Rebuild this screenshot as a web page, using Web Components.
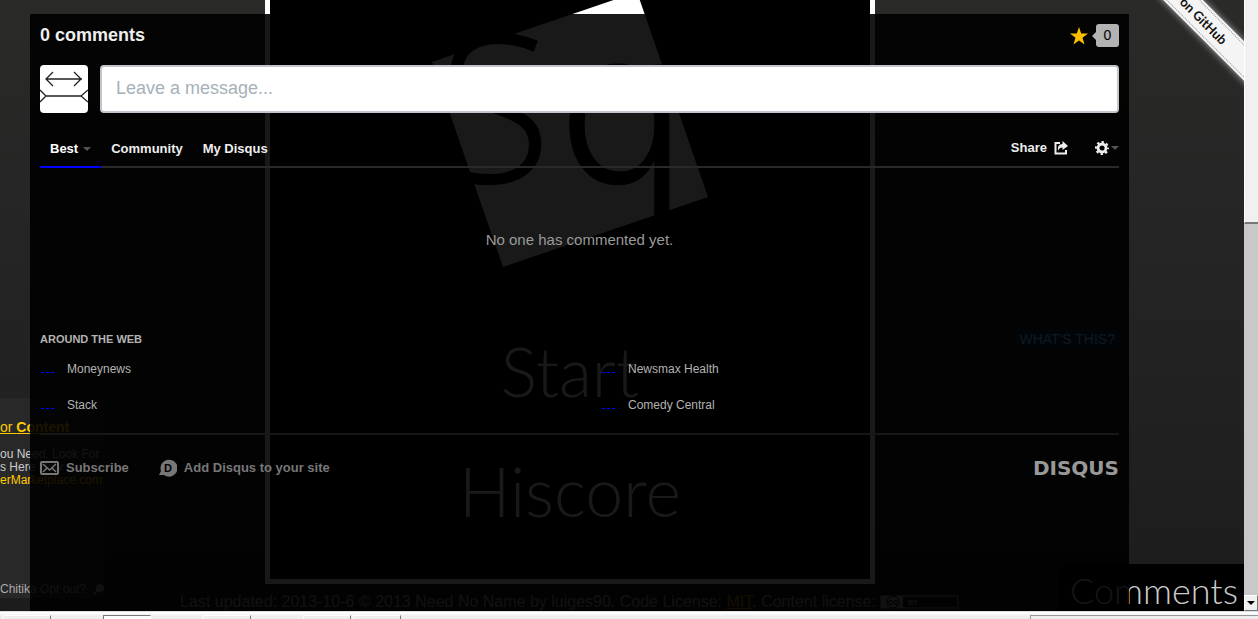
<!DOCTYPE html>
<html lang="en">
<head>
<meta charset="utf-8">
<title>Sq - Comments</title>
<style>
html, body { margin: 0; height: 100%; }
body { font-family: "Liberation Sans", Arial, sans-serif; background: #eee; overflow: hidden; }
</style>
</head>
<body>
<app-window></app-window>
<script>
const define = (name, html) => {
  const template = document.createElement('template');
  template.innerHTML = html;
  customElements.define(name, class extends HTMLElement {
    constructor() {
      super();
      this.attachShadow({ mode: 'open' }).append(template.content.cloneNode(true));
    }
  });
};

define('square-logo', `
<style>
:host { display: block; height: 267px; }
svg { display: block; width: 100%; height: 100%; }
text { font: 300 205px "Open Sans", sans-serif; fill: #000; stroke: #000; stroke-width: 2px; }
.q { font-family: Inter, sans-serif; font-size: 214px; stroke-width: 1px; }
</style>
<svg viewBox="270 0 600 267" preserveAspectRatio="xMidYMin">
  <path d="M432 62 637-8 708 197 503 267Z" fill="#fff"/>
  <text y="182"><tspan x="439">S</tspan><tspan class="q" x="558">q</tspan></text>
</svg>`);

define('game-board', `
<style>
:host { display: flex; flex-direction: column; align-items: center; box-sizing: border-box; width: 610px;
  border: solid #fff; border-width: 0 5px 5px; background: #000; color: #fff; padding-bottom: 48px; }
square-logo { align-self: stretch; }
a { color: inherit; text-decoration: none; font: 300 68px/80px Lato, sans-serif; }
.start { margin-top: 64px; }
.score { margin-top: 40px; }
</style>
<square-logo></square-logo>
<a class="start" href="#start">Start</a>
<a class="score" href="#hiscore">Hiscore</a>`);

define('side-ad', `
<style>
:host { display: flex; flex-direction: column; box-sizing: border-box; width: 105px; height: 200px;
  background: #282828; color: #ccc; font-size: 12px; line-height: 13px; white-space: nowrap; }
.title { font-size: 14px; line-height: 20px; margin: 19px 0 11px; }
a { color: #fc0; }
.site { text-decoration: none; }
.out { margin-top: auto; padding-bottom: 2px; display: flex; justify-content: space-between; color: #aaa; }
.out a { color: inherit; text-decoration: none; }
</style>
<a class="title" href="#ad">or <b>Content</b></a>
<span>ou Need. Look For</span>
<span>s Here Now</span>
<a class="site" href="#site">erMarketplace.com</a>
<div class="out"><a href="#optout">Chitika Opt out?</a>
<svg width="12" height="12" viewBox="0 0 12 12"><circle cx="7" cy="5" r="4" fill="#9ab"/><path d="M5 7 1 11" stroke="#9ab" stroke-width="2"/></svg></div>`);

define('page-footer', `
<style>
:host { display: flex; align-items: center; justify-content: center; gap: 4px; color: #aaa; font-size: 16px; line-height: 20px; white-space: nowrap; }
a { color: #c80; }
svg { display: block; }
text { font: bold 7px "Liberation Sans", sans-serif; fill: #aaa; }
.cc { fill: #000; font-size: 9px; }
</style>
<span>Last updated: 2013-10-6 © 2013 Need No Name by luiges90. Code License: <a href="#mit">MIT</a>. Content license:</span>
<svg width="79" height="14" viewBox="0 0 79 14">
  <rect x="1" y="1" width="77" height="12" fill="none" stroke="#aaa"/>
  <path d="M1 1h22v12H1z" fill="#aaa"/>
  <circle cx="13" cy="7" r="6" fill="none" stroke="#000"/>
  <text class="cc" x="8" y="10">cc</text><text x="28" y="10">BY</text>
</svg>`);

define('github-ribbon', `
<style>
:host { display: block; position: absolute; top: -11px; right: -47px; width: 210px; box-sizing: border-box;
  transform: rotate(45deg); background: #f4f4f4; box-shadow: 0 0 7px #fff9; padding: 2px 0; text-align: center; }
a { display: block; border: dotted #999; border-width: 1px 0; color: #111; font: bold 13px/22px Lato, sans-serif; text-decoration: none; }
</style>
<a href="#github">Fork me on GitHub</a>`);

define('comments-tab', `
<style>
:host { display: block; position: absolute; right: 0; bottom: 0; background: #000; border-radius: 10px 0 0 0; }
a { display: block; color: #ccc; padding: 5px 6px 0 12px; font: 300 36px/42px Lato, sans-serif; text-decoration: none; }
</style>
<a href="#comments">Comments</a>`);

define('disqus-header', `
<style>
:host { display: block; }
.top { display: flex; justify-content: space-between; align-items: flex-start; height: 23px; padding-top: 10px; }
h2 { margin: 0; font-size: 18px; line-height: 22px; color: #eee; }
.fav { display: flex; align-items: center; gap: 8px; border: 0; padding: 0; background: none; font: 14px/23px "Liberation Sans", sans-serif; }
.count { position: relative; width: 23px; border-radius: 3px; background: #b3b3b3; color: #000; }
.count::before { content: ""; position: absolute; left: -4px; top: 8px; border: solid transparent; border-width: 4px 4px 4px 0; border-right-color: #b3b3b3; }
form { display: flex; gap: 12px; margin-top: 18px; }
.avatar { flex: none; border-radius: 4px; background: #fff; }
input { flex: 1; min-width: 0; box-sizing: border-box; height: 48px; border: 2px solid #c2c6cc; border-radius: 4px; background: #fff;
  padding: 0 14px 2px; font: 18px "Liberation Sans", sans-serif; color: #333; outline: 0; }
input::placeholder { color: #a5b2b9; opacity: 1; }
</style>
<div class="top"><h2>0 comments</h2>
<button class="fav" aria-label="Favorite"><svg width="18" height="18" viewBox="0 0 18 18"><path d="M9 0 11.200 6.500H18L12.500 10.700 14.500 17.500 9 13.400 3.500 17.500 5.500 10.700 0 6.500H6.800Z" fill="#ffbf00"/></svg><span class="count">0</span></button></div>
<form>
<svg class="avatar" width="48" height="48" viewBox="0 0 48 48" fill="none" stroke="#222"><path d="M6 14H42M13 7 6 14 13 21M34 7 41 14 34 21M6 31H42M0 25 6 31 0 37M48 25 41 31 48 37" stroke-width="1.300"/></svg>
<input type="text" placeholder="Leave a message..." aria-label="Leave a message">
</form>`);

define('disqus-nav', `
<style>
:host { display: flex; justify-content: space-between; margin-top: 18px; border-bottom: 2px solid #292929; font-size: 13px; font-weight: bold; line-height: 16px; }
nav, .tools { display: flex; }
a, button { display: flex; align-items: center; color: #eee; text-decoration: none; font: inherit; border: 0; background: none; }
nav a { padding: 10px 10px 9px; }
.on { border-bottom: 2px solid #00f; margin-bottom: -2px; color: #fff; gap: 5px; }
.caret { border: solid transparent; border-width: 4px 4px 0; border-top-color: #555; }
.tools { gap: 27px; align-items: center; padding-bottom: 2px; }
button { padding: 0; gap: 7px; }
.gear { gap: 2px; }
svg { display: block; }
</style>
<nav><a class="on" href="#best">Best<i class="caret"></i></a><a href="#community">Community</a><a href="#my">My Disqus</a></nav>
<div class="tools">
<button>Share<svg width="14" height="14" viewBox="0 0 14 14"><path d="M6 2H1.500V12.500H12V9" fill="none" stroke="#eee" stroke-width="2"/><path d="M8.500 0 14 5 8.500 9V6.500Q5 6.500 4 10 3 3 8.500 3Z" fill="#eee"/></svg></button>
<button class="gear" aria-label="Settings"><svg width="14" height="14" viewBox="0 0 14 14"><circle cx="7" cy="7" r="4" fill="none" stroke="#eee" stroke-width="2.800"/><circle cx="7" cy="7" r="6" fill="none" stroke="#eee" stroke-width="2" stroke-dasharray="2.400 2.312" stroke-dashoffset="1.200"/></svg><i class="caret"></i></button>
</div>`);

define('web-link', `
<style>
:host { display: flex; gap: 11px; font-size: 12px; line-height: 16px; color: #b3b3b3; }
a { width: 16px; text-decoration: none; }
a::before { content: ""; display: block; width: 14px; height: 1px; margin: 11px 0 0 1px; background: repeating-linear-gradient(90deg, #00f 0 3px, transparent 3px 5px); }
</style>
<a href="#story" aria-label="Story"></a><slot></slot>`);

define('around-web', `
<style>
:host { display: block; padding-bottom: 20px; border-bottom: 2px solid #171717; }
header { display: flex; justify-content: space-between; align-items: center; }
h3 { margin: 0; font-size: 11px; line-height: 20px; color: #b3b3b3; }
header a { color: #0e1b24; background: #020507; border-radius: 3px; padding: 0 4px; font-size: 14px; line-height: 20px; text-decoration: none; }
.links { display: grid; grid-template-columns: 1fr 1fr; column-gap: 43px; row-gap: 20px; margin-top: 12px; }
</style>
<header><h3>AROUND THE WEB</h3><a href="#what">WHAT'S THIS?</a></header>
<div class="links"><web-link>Moneynews</web-link><web-link>Newsmax Health</web-link><web-link>Stack</web-link><web-link>Comedy Central</web-link></div>`);

define('disqus-footer', `
<style>
:host { display: flex; align-items: center; gap: 30px; margin-top: 23px; font-size: 13px; font-weight: bold; line-height: 20px; }
a { display: flex; align-items: center; gap: 7px; color: #777; text-decoration: none; }
.brand { margin-left: auto; color: #999; font: bold 20px/20px "DejaVu Sans", sans-serif; }
text { font: bold 11px "Liberation Sans", sans-serif; fill: #020202; }
</style>
<a href="#subscribe"><svg width="19" height="14" viewBox="0 0 19 14" fill="none" stroke="#777"><rect x="1" y="1" width="17" height="12" rx="1" stroke-width="2"/><path d="M3 3 9.500 9 16 3M3 11 7 7M16 11 12 7" stroke-width="1.500"/></svg>Subscribe</a>
<a href="#add"><svg width="18" height="18" viewBox="0 0 18 18"><path d="M0 16 2 12A8.500 8.500 0 1 1 5 16Z" fill="#777"/><text x="5" y="13">D</text></svg>Add Disqus to your site</a>
<a class="brand" href="#disqus">DISQUS</a>`);

define('comments-panel', `
<style>
:host { display: block; background: rgba(0,0,0,.9); padding: 0 10px; }
p { margin: 62px 0 79px; text-align: center; font-size: 15px; line-height: 20px; color: #999; }
</style>
<disqus-header></disqus-header>
<disqus-nav></disqus-nav>
<p>No one has commented yet.</p>
<around-web></around-web>
<disqus-footer></disqus-footer>`);

define('scroll-bar', `
<style>
:host { display: flex; flex-direction: column; width: 14px; background: #c8c8c8; }
.thumb { flex: 0 0 calc(37% - 2px); box-sizing: border-box; background: #f0f0f0; border-left: 1px solid #fff; border-bottom: 2px solid #777; }
button { margin-top: auto; height: 16px; padding: 0; border: 1px solid; border-color: #fff #777 #777 #fff; background: #f0f0f0; display: grid; place-items: center; }
i { border: solid transparent; border-width: 4px 4px 0; border-top-color: #000; }
</style>
<div class="thumb"></div><button aria-label="Scroll down"><i></i></button>`);

define('status-bar', `
<style>
:host { display: flex; height: 8px; box-sizing: border-box; border-top: 1px solid #ddd; background: linear-gradient(#fff 1px, #f0f4f8 3px, #eee 4px); padding: 3px 0 0 3px; align-items: stretch; }
i { box-sizing: border-box; width: 48px; border: 1px solid #fff; border-right-color: #777; border-bottom: 0; }
i + i { margin-left: 52px; }
i.down { border-color: #777 #fff #fff #777; background: #fff; }
i.near { margin-left: 2px; }
.field { flex: 0 0 227px; margin-left: auto; border: 1px solid #999; border-width: 1px 0 0 1px; }
</style>
<i></i><i class="down"></i><i></i><i></i><i class="near"></i><span class="field"></span>`);

define('app-window', `
<style>
:host { display: grid; grid-template-rows: minmax(0, 1fr) auto; height: 100%; }
.view { display: grid; grid-template-columns: minmax(0, 1fr) auto; min-height: 0; }
main { position: relative; overflow: hidden; display: grid; grid-template: minmax(0, 1fr) / minmax(0, 1fr); background: linear-gradient(#2a2a29, #222 60%, #1c1c1c); }
.game, comments-panel { grid-area: 1 / 1; }
.game { display: grid; grid-template-columns: 105px 1fr 105px; grid-template-rows: auto auto; align-content: start; }
side-ad { margin-top: 398px; grid-area: 1 / 1 / 3 / 2; align-self: start; }
game-board { grid-area: 1 / 1 / 2 / 4; justify-self: center; margin-right: 104px; }
page-footer { grid-area: 2 / 1 / 3 / 4; margin: 8px 105px 0 0; }
comments-panel { position: relative; margin: 14px 115px 0 30px; }
</style>
<div class="view"><main>
<div class="game"><side-ad></side-ad><game-board></game-board><page-footer></page-footer></div>
<comments-tab></comments-tab>
<comments-panel></comments-panel>
<github-ribbon></github-ribbon>
</main><scroll-bar></scroll-bar></div>
<status-bar></status-bar>`);
</script>
</body>
</html>
